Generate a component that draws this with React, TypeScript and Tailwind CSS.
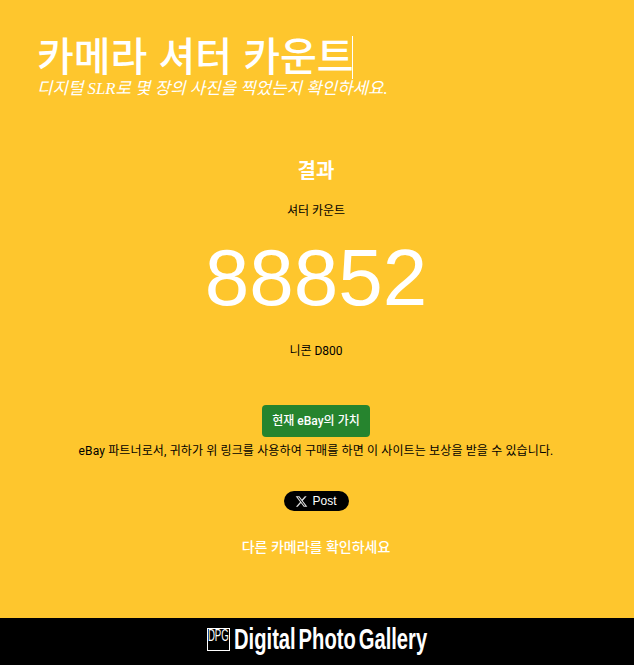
import { FaXTwitter } from 'react-icons/fa6';

const sans = 'font-["Roboto","Noto_Sans_CJK_KR",sans-serif]';

export default function App() {
  return (
    <div className={`flex min-h-[665px] flex-col bg-[#fec62d] ${sans}`}>
      {/* Title */}
      <header className="pl-[37px] pt-[36px]">
        <h1 className='flex h-[43px] items-center font-["Liberation_Sans","Noto_Sans_CJK_KR",sans-serif] text-[40px] leading-[45px] font-medium text-white'>
          <span>카메라 셔터 카운트</span>
          <span className="-ml-[2px] h-[43px] w-px bg-white" />
        </h1>
        <p className='font-["Liberation_Serif","Noto_Sans_CJK_KR",serif] text-[16.8px] leading-[20px] text-white italic'>
          디지털 SLR로 몇 장의 사진을 찍었는지 확인하세요.
        </p>
      </header>

      {/* Result */}
      <main className="flex flex-1 flex-col items-center pt-[58px] pr-[2px] text-center">
        <h2 className="text-[20px] leading-[28px] font-bold text-white">결과</h2>
        <p className="mt-[18px] text-[12px] leading-[16px] text-black">셔터 카운트</p>
        <p className='mt-[13px] font-["Liberation_Sans",sans-serif] text-[80px] leading-[92px] text-white'>88852</p>
        <p className="mt-[19px] text-[12px] leading-[16px] text-black">니콘 D800</p>

        <a className="mt-[46px] flex h-[32px] w-[108px] items-center justify-center rounded-[4px] bg-[#26842e] text-[12px] font-medium text-white">
          현재 eBay의 가치
        </a>
        <p className="mt-[6px] text-[12px] leading-[16px] tracking-[0.13px] text-black">
          eBay 파트너로서, 귀하가 위 링크를 사용하여 구매를 하면 이 사이트는 보상을 받을 수 있습니다.
        </p>

        <a className="mt-[32px] flex h-[20px] w-[65px] items-center justify-center gap-[4px] rounded-full bg-black font-['Liberation_Sans',sans-serif] text-[12px] text-white">
          <FaXTwitter className="h-[13px] w-[13px] text-[#ddd]" />
          Post
        </a>
        <a className="mt-[26px] text-[14px] leading-[20px] font-medium text-white">다른 카메라를 확인하세요</a>
      </main>

      {/* Footer logo */}
      <footer className="flex h-[47px] items-start justify-center bg-black pt-[10px] text-white">
        <div className="flex items-start gap-[4px]">
          <div className="flex h-[23px] w-[23px] items-start justify-center border border-white">
            <span className='scale-x-[0.6] font-["Liberation_Sans",sans-serif] text-[16px] leading-[13px] font-normal'>DPG</span>
          </div>
          <span className='-mt-[6px] w-[193px] origin-left scale-x-[0.673] font-["Liberation_Sans",sans-serif] text-[30px] leading-[34px] font-bold [word-spacing:-4px] whitespace-nowrap'>
            Digital Photo Gallery
          </span>
        </div>
      </footer>
    </div>
  );
}
